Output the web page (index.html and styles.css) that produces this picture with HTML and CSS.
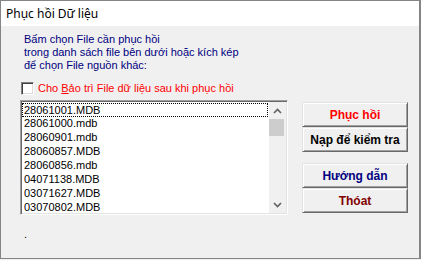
FILE: index.html
```html
<!DOCTYPE html>
<html>
<head>
<meta charset="utf-8">
<link rel="stylesheet" href="styles.css">
</head>
<body>
<div class="window">
  <div class="titlebar">Phục hồi Dữ liệu</div>
  <div class="content">
    <div class="intro">
      <div>Bấm chọn File cần phục hồi</div>
      <div>trong danh sách file bên dưới hoặc kích kép</div>
      <div>để chọn File nguồn khác:</div>
    </div>
    <label class="check">
      <span class="box"></span>
      <span class="check-text">Cho <u>B</u>ảo trì File dữ liệu sau khi phục hồi</span>
    </label>
    <div class="main">
      <div class="list">
        <div class="items">
          <div class="item focus">28061001.MDB</div>
          <div class="item">28061000.mdb</div>
          <div class="item">28060901.mdb</div>
          <div class="item">28060857.MDB</div>
          <div class="item">28060856.mdb</div>
          <div class="item">04071138.MDB</div>
          <div class="item">03071627.MDB</div>
          <div class="item">03070802.MDB</div>
        </div>
        <div class="scrollbar">
          <div class="arrow">
            <svg width="9" height="6" viewBox="0 0 9 6"><polyline points="1,5 4.5,1.5 8,5" fill="none" stroke="#606060" stroke-width="1.6"/></svg>
          </div>
          <div class="thumb"></div>
          <div class="track"></div>
          <div class="arrow">
            <svg width="9" height="6" viewBox="0 0 9 6"><polyline points="1,1 4.5,4.5 8,1" fill="none" stroke="#606060" stroke-width="1.6"/></svg>
          </div>
        </div>
      </div>
      <div class="buttons">
        <div class="group">
          <div class="btn red">Phục hồi</div>
          <div class="btn">Nạp để kiểm tra</div>
        </div>
        <div class="group">
          <div class="btn navy">Hướng dẫn</div>
          <div class="btn maroon">Thóat</div>
        </div>
      </div>
    </div>
    <div class="dot">.</div>
  </div>
</div>
</body>
</html>
```
FILE: styles.css
```css
html, body {
  margin: 0;
  padding: 0;
}
body {
  width: 421px;
  height: 260px;
  overflow: hidden;
  background: #f0f0f0;
  font-family: "Liberation Sans", Arial, sans-serif;
}
.window {
  box-sizing: border-box;
  width: 421px;
  height: 259px;
  border: 1px solid #858585;
  border-right: 2px solid #858585;
  background: #f0f0f0;
  display: flex;
  flex-direction: column;
}
.titlebar {
  height: 25px;
  line-height: 25px;
  background: #ffffff;
  padding-left: 5px;
  font-family: "Noto Sans", sans-serif;
  font-size: 12px;
  color: #000;
}
.content {
  padding: 7px 0 0 19px;
  display: flex;
  flex-direction: column;
}
.intro {
  margin-left: 4px;
  font-size: 11px;
  line-height: 13px;
  color: #000080;
}
.check {
  display: flex;
  align-items: center;
  margin-top: 9px;
  margin-left: 1px;
  height: 14px;
}
.box {
  box-sizing: border-box;
  width: 13px;
  height: 13px;
  background: #fff;
  border-top: 1px solid #808080;
  border-left: 1px solid #808080;
  border-bottom: 1px solid #fff;
  border-right: 1px solid #fff;
  box-shadow: inset 1px 1px 0 #404040, inset -1px -1px 0 #dcdcdc;
}
.check-text {
  margin-left: 4px;
  font-size: 11px;
  line-height: 14px;
  color: #ff0000;
}
.main {
  display: flex;
  gap: 14px;
  margin-top: 5px;
}
.list {
  box-sizing: border-box;
  width: 268px;
  height: 115px;
  display: flex;
  background: #fff;
  border-top: 1px solid #a0a0a0;
  border-left: 1px solid #a0a0a0;
  border-bottom: 1px solid #fff;
  border-right: 1px solid #fff;
  box-shadow: inset 1px 1px 0 #696969, inset -1px -1px 0 #e3e3e3;
  padding: 1px 1px 1px 1px;
}
.items {
  flex: 1;
  padding-top: 1px;
  overflow: hidden;
}
.item {
  height: 14px;
  line-height: 13px;
  padding-left: 2px;
  font-size: 11px;
  color: #000;
  box-sizing: border-box;
}
.item.focus {
  border: 1px dotted #000;
  padding-left: 1px;
  line-height: 12px;
  margin-right: 1px;
}
.scrollbar {
  width: 17px;
  background: #f0f0f0;
  display: flex;
  flex-direction: column;
}
.arrow {
  height: 17px;
  display: flex;
  align-items: center;
  justify-content: center;
}
.thumb {
  height: 17px;
  margin: 0 2px 0 0;
  background: #cdcdcd;
}
.track {
  flex: 1;
}
.buttons {
  display: flex;
  flex-direction: column;
  gap: 11px;
  padding-top: 2px;
}
.btn {
  box-sizing: border-box;
  width: 106px;
  height: 25px;
  display: flex;
  align-items: center;
  justify-content: center;
  font-size: 12px;
  font-weight: bold;
  color: #000;
  background: #f0f0f0;
  border-top: 1px solid #e3e3e3;
  border-left: 1px solid #e3e3e3;
  border-bottom: 1px solid #696969;
  border-right: 1px solid #696969;
  box-shadow: inset 1px 1px 0 #ffffff, inset -1px -1px 0 #a0a0a0;
}
.btn.red { color: #ff0000; }
.btn.navy { color: #000080; }
.btn.maroon { color: #800000; }
.dot {
  margin-top: 13px;
  margin-left: 4px;
  font-size: 11px;
  line-height: 13px;
  color: #000;
}
```
